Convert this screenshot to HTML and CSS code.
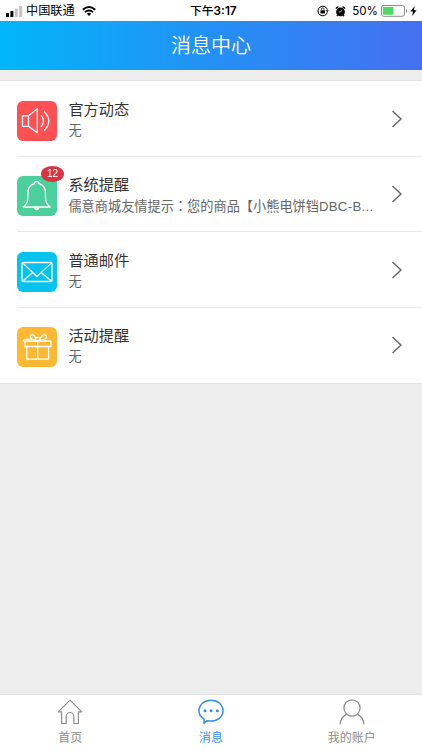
FILE: index.html
```html
<!DOCTYPE html>
<html lang="zh-CN">
<head>
<meta charset="utf-8">
<title>消息中心</title>
<link rel="stylesheet" href="styles.css">
</head>
<body>
<div class="status">
  <svg class="signal" viewBox="0 0 17 11"><rect x="0" y="7" width="3" height="4" rx=".6"/><rect x="4.4" y="5" width="3" height="6" rx=".6"/><g fill="#c4c4c4"><rect x="8.8" y="2.5" width="3" height="8.5" rx=".6"/><rect x="13.2" y="0" width="3" height="11" rx=".6"/></g></svg>
  <span class="carrier">中国联通</span>
  <svg class="wifi" viewBox="0 0 14 10"><g fill="none" stroke="#000" stroke-width="1.9"><path d="M.8 3.7Q7-1.7 13.2 3.7"/><path d="M3 6.1Q7 2.7 11 6.1"/></g><path d="M4.8 7.7Q7 6 9.2 7.7L7 10z"/></svg>
  <span class="time">下午<b>3:17</b></span>
  <div class="right">
    <svg class="lock" viewBox="0 0 12 12"><path d="M10.4 7.4A4.8 4.8 0 1 1 10.4 4.6" fill="none" stroke="#000" stroke-width="1"/><path d="M8.6 5.2h3.2L10.2 7.3z"/><rect x="3.5" y="5.3" width="4.4" height="3.2"/><path d="M4.4 5.5V4.2a1.3 1.3 0 0 1 2.6 0v1.3" fill="none" stroke="#000" stroke-width=".8"/></svg>
    <svg class="alarm" viewBox="0 0 11 11"><circle cx="5.5" cy="5.9" r="4.4"/><path d="M1.2 2.8A2 2 0 0 1 3.4 1M9.8 2.8A2 2 0 0 0 7.6 1M2.7 9.1l-.8 1M8.3 9.1l.8 1" fill="none" stroke="#000" stroke-width="1.4"/><path d="M7 4L5.5 6H3.8" fill="none" stroke="#fff" stroke-width=".7"/></svg>
    <span class="percent">50%</span>
    <svg class="battery" viewBox="0 0 27 12"><rect x=".5" y=".5" width="23" height="10.8" rx="2.2" fill="#fff" stroke="#8d8d8d"/><rect x="2" y="2" width="10.5" height="7.8" rx=".8" fill="#4cd964"/><path d="M25 4v4q1.2-.5 1.2-2T25 4z" fill="#8d8d8d"/></svg>
    <svg class="bolt" viewBox="0 0 7 10"><path d="M4.8 0L.3 5.6h2.8L2 10l4.7-5.8H3.8z"/></svg>
  </div>
</div>
<header class="header">消息中心</header>
<main class="list">
  <div class="item">
    <div class="icon red"><svg viewBox="0 0 40 40"><path d="M5.5 14.8h6L20.3 7.7v24.1l-8.8-6.4h-6zM11.5 14.8v10.6"/><path d="M24.3 14.6q4.4 5.3 0 10.9M27.5 10.9q8.6 9 0 18.4"/></svg></div>
    <div class="body"><div class="text"><h2>官方动态</h2><p>无</p></div><svg class="arrow" viewBox="0 0 12 18"><path d="M1.5 1L10 9l-8.5 8"/></svg></div>
  </div>
  <div class="item">
    <div class="icon green"><svg viewBox="0 0 40 40"><path d="M6.2 31q4.7-3.3 4.7-9.5v-4c0-5 2.7-8.8 6.5-9.8q0-2.2 2.3-2.2t2.3 2.2c3.8 1 6.5 4.8 6.5 9.8v4q0 6.2 4.7 9.5z"/><path d="M17.9 32.5q1.8 2.2 3.6 0z"/></svg><span class="badge">12</span></div>
    <div class="body"><div class="text"><h2>系统提醒</h2><p>儒意商城友情提示<span class="colon" lang="zh-TW">：</span>您的商品【小熊电饼铛<span class="model">DBC-B...</span></p></div><svg class="arrow" viewBox="0 0 12 18"><path d="M1.5 1L10 9l-8.5 8"/></svg></div>
  </div>
  <div class="item">
    <div class="icon cyan"><svg viewBox="0 0 40 40"><rect x="5" y="10.5" width="30" height="19" rx="1.2"/><path d="M6.4 11.6L20 24.5l13.6-12.9M6.4 28.5l9.4-8M33.6 28.5l-9.4-8"/></svg></div>
    <div class="body"><div class="text"><h2>普通邮件</h2><p>无</p></div><svg class="arrow" viewBox="0 0 12 18"><path d="M1.5 1L10 9l-8.5 8"/></svg></div>
  </div>
  <div class="item">
    <div class="icon yellow"><svg viewBox="0 0 40 40"><path d="M8 14h26v5.5H8zM9.8 19.5h21.8v12.7H9.8zM20.7 14v18.2"/><path d="M18.2 13.8c-3.5-2-6-1.8-7.6-1.4-2-.2-4-.6-4.4 1.5M18.2 13.3c-3-1-5.9-2.5-4.8-4.6 1.6-2.2 4.4-.4 5.5 3M23.2 13.3c4.2-.8 7.1-2 6.1-4.3-1.5-2.3-4.6-.8-6.3 2.7"/><ellipse cx="20.8" cy="12.2" rx="2.4" ry="1.7"/></svg></div>
    <div class="body"><div class="text"><h2>活动提醒</h2><p>无</p></div><svg class="arrow" viewBox="0 0 12 18"><path d="M1.5 1L10 9l-8.5 8"/></svg></div>
  </div>
</main>
<nav class="tabs">
  <a class="tab"><svg viewBox="0 0 26 26"><path d="M13 1.2L1.3 12.9h3.3v11.6h4.6v-7.2a3.8 3.8 0 0 1 7.6 0v7.2h4.6V12.9h3.3z"/></svg><span>首页</span></a>
  <a class="tab active"><svg viewBox="0 0 26 26"><path d="M6 19.8C2.8 18 1 15 1 11.7 1 5.7 6.2 1.2 13 1.2s12 4.5 12 10.5-5.2 10.4-12 10.4c-1.7 0-2.8-.2-3.8-.4L6 24.2z"/><g class="dots"><circle cx="7" cy="11.8" r="1.5"/><circle cx="13" cy="11.8" r="1.5"/><circle cx="19.3" cy="11.8" r="1.5"/></g></svg><span>消息</span></a>
  <a class="tab"><svg viewBox="0 0 26 26"><circle cx="13" cy="9" r="8.1"/><path d="M1 25.4q.5-7 6.7-10.3M25 25.4q-.5-7-6.7-10.3"/></svg><span>我的账户</span></a>
</nav>
</body>
</html>
```
FILE: styles.css
```css
* { box-sizing: border-box; }
body {
  margin: 0;
  height: 750px;
  display: flex;
  flex-direction: column;
  overflow: hidden;
  background: #ededed;
  color: #333;
  font-family: "Liberation Sans", "Noto Sans CJK SC", sans-serif;
}
svg { display: block; flex: none; }
h2, p { margin: 0; font-weight: 400; white-space: nowrap; }

.status {
  flex: none;
  height: 20.5px;
  padding: 1px 5px 0 6px;
  display: grid;
  grid-template-columns: 17px 53px 105px 1fr auto;
  align-items: center;
  column-gap: 3px;
  background: #fff;
  color: #000;
  font-size: 12.2px;
  line-height: 20px;
  white-space: nowrap;
}
.signal { width: 17px; height: 11px; }
.wifi { width: 14px; height: 10px; }
.time { font-family: Inter, "Noto Sans CJK SC", sans-serif; font-weight: 500; font-size: 11.8px; }
.time b { font-weight: 600; }
.right { display: flex; align-items: center; }
.lock { width: 12px; height: 12px; margin-right: 6px; }
.alarm { width: 11px; height: 11px; margin-right: 6px; }
.percent { font-family: Inter, sans-serif; font-size: 11.6px; margin-right: 3px; }
.battery { width: 27px; height: 12px; margin-right: 2px; }
.bolt { width: 7px; height: 10px; }

.header {
  flex: none;
  height: 49.5px;
  background: linear-gradient(90deg, #02b5f9, #2490f5 50%, #4570ef);
  color: #fff;
  font-size: 20px;
  font-weight: 350;
  line-height: 51px;
  text-align: center;
}

.list {
  flex: none;
  margin-top: 10px;
  border-top: 1px solid #e0e0e0;
  border-bottom: 1px solid #e0e0e0;
  background: #fff;
}
.item {
  height: 75.5px;
  padding-left: 17px;
  display: flex;
  align-items: center;
}
.icon {
  position: relative;
  flex: none;
  width: 40px;
  height: 40px;
  margin-top: 4px;
  border-radius: 6px;
}
.icon svg { width: 40px; height: 40px; fill: none; stroke: #fff; stroke-width: 1.3; stroke-linejoin: round; stroke-linecap: round; }
.red { background: #ff5153; }
.green { background: #4bcf9d; }
.cyan { background: #05c3ee; }
.yellow { background: #ffb833; }
.badge {
  position: absolute;
  left: 24px;
  top: -10px;
  width: 23px;
  height: 16px;
  border-radius: 50%;
  background: #dc3343;
  color: #fff;
  font-size: 10px;
  line-height: 16px;
  text-align: center;
}
.body {
  flex: 1;
  height: 100%;
  padding: 0 19px 0 11.4px;
  display: flex;
  align-items: center;
  justify-content: space-between;
}
.item:not(:last-child) { background: linear-gradient(#e8e8e8, #e8e8e8) 17px 100% / 100% 1px no-repeat; }
.text { padding-top: 2px; }
.text h2 { height: 21px; font-size: 15.2px; line-height: 21px; }
.text p { height: 21px; color: #666; font-size: 13.2px; line-height: 21px; }
.colon { font-family: "Noto Sans CJK TC", sans-serif; }
.model { letter-spacing: .3px; }
.arrow { width: 12px; height: 18px; fill: none; stroke: #666; stroke-width: 1.4; }

.tabs {
  flex: none;
  height: 56px;
  margin-top: auto;
  border-top: 1px solid #e3e3e3;
  display: grid;
  grid-template-columns: repeat(3, 1fr);
  background: #fff;
}
.tab {
  padding-top: 4px;
  display: flex;
  flex-direction: column;
  align-items: center;
  color: #8e8e8e;
  font-size: 12px;
  line-height: 20px;
}
.tab svg { width: 26px; height: 26px; margin-bottom: 3px; fill: none; stroke: currentColor; stroke-width: 1.2; stroke-linejoin: round; }
.active { color: #368fe6; }
.active svg { stroke-width: 1.5; }
.dots { fill: currentColor; stroke: none; }
```
